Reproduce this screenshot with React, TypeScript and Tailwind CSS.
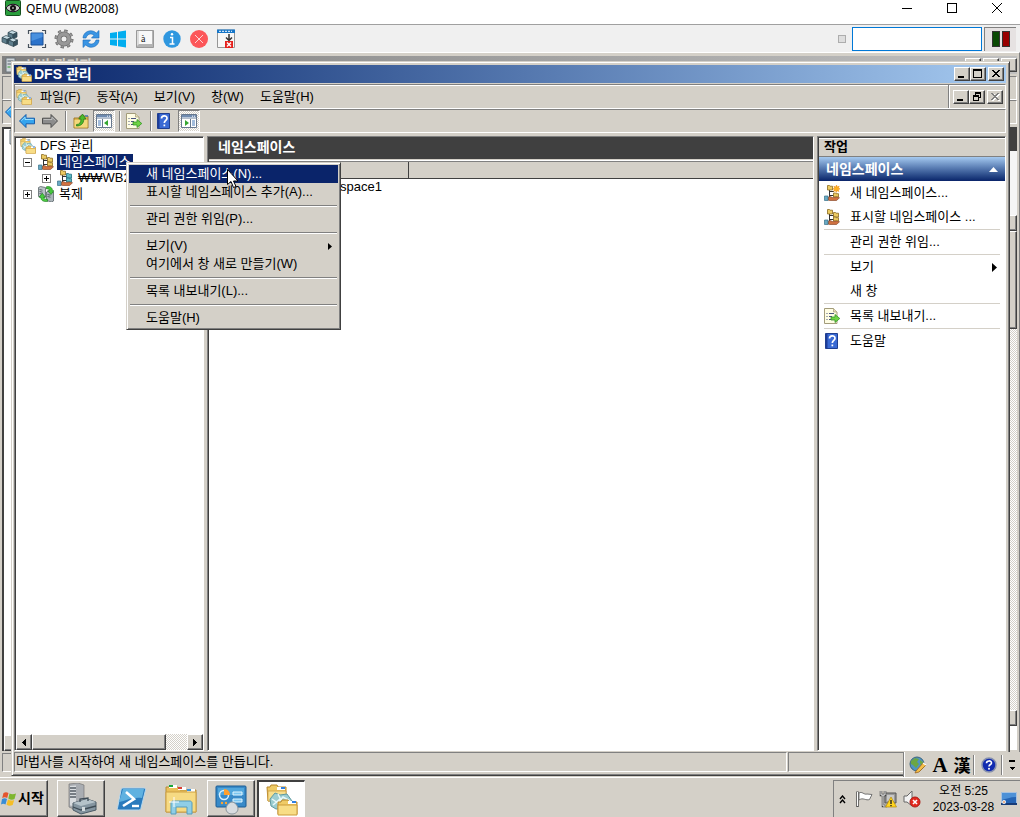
import React from "react";

const raised =
  "border border-t-white border-l-white border-r-[#404040] border-b-[#404040] bg-[#d4d0c8] shadow-[inset_-1px_-1px_0_#808080]";
const sunken = "border border-t-[#808080] border-l-[#808080] border-r-white border-b-white";
const pane = "border border-t-[#808080] border-l-[#808080] border-r-white border-b-white";
const checker =
  "bg-[repeating-conic-gradient(#ffffff_0_25%,#d4d0c8_0_50%)] bg-[length:2px_2px]";

type IconProps = { className?: string };

function Folders({ className = "size-4" }: IconProps) {
  return (
    <svg viewBox="0 0 32 32" className={className} aria-hidden="true">
      <path d="M1 3h3l1-2h6l1 2h8v14H2z" fill="#efcb66" stroke="#b8872b" />
      <path d="M11 3h8v3h-8z" fill="#fff" />
      <path d="M15 3h4v2h-4z" fill="#2f7fe0" />
      <path d="M2 7h18v10H2z" fill="#f8df8d" stroke="#cfa145" strokeWidth=".8" />
      <path d="m4 15 5-6 5 2 7-1 5 7-4 7-12 1-5-3z" fill="#9ccdd0" stroke="#5e9ba2" />
      <path d="m6 15 6 4 5-6 7 4M7 21l7-6 8 7M12 10l3 6" fill="none" stroke="#e8f8f8" strokeWidth="1.500" />
      <path d="M12 18h3l1-2h6l1 2h8v12H12z" fill="#efcb66" stroke="#b8872b" />
      <path d="M22 17h8v3h-8z" fill="#fff" />
      <path d="M26 17h4v2h-4z" fill="#2f7fe0" />
      <path d="M12 21h19v10H12z" fill="#f8dd86" stroke="#cb9b3b" />
    </svg>
  );
}

function Namespace({ className = "size-4", star = false, teal = false }: IconProps & { star?: boolean; teal?: boolean }) {
  const c = teal ? "#5cbcc4" : "#eccb62";
  const s = teal ? "#236f80" : "#8c6a1e";
  return (
    <svg viewBox="0 0 16 16" className={className} aria-hidden="true">
      <path d="M5.500 4v8M5.500 6.500H10M5.500 10.500H10" stroke="#333" strokeWidth="1" fill="none" />
      <path d="M3.500.5h2l.5.700h2.500V5h-5z" fill="#eccb62" stroke="#8c6a1e" strokeWidth=".8" />
      {!star && <path d="M9.500 3.500h2l.5.700h2.500V8h-5z" fill={c} stroke={s} strokeWidth=".8" />}
      <path d="M9.500 8h2l.5.700h2.500V12h-5z" fill={c} stroke={s} strokeWidth=".8" />
      <path d="M4 12.500 6 11.500l2.500 1 4-.5 3 .8-3 2.700H5.500L4 15z" fill="#cf7140" stroke="#7f3c1c" strokeWidth=".6" />
      <path d="M.5 11h3.500v4.500H.5z" fill="#69a9c4" stroke="#38718a" strokeWidth=".7" />
      {star && (
        <path
          d="m12.500 0 .8 2 1.900-.9-.8 1.900 1.600.9-1.800.7.700 1.900-1.900-.8-.8 1.800-.7-1.900-1.900.8.800-1.800L9 3.900l1.500-.9-.7-1.800 1.900.8z"
          fill="#ffb020"
          stroke="#e8870c"
          strokeWidth=".5"
        />
      )}
    </svg>
  );
}

function Replication({ className = "size-4" }: IconProps) {
  return (
    <svg viewBox="0 0 16 16" className={className} aria-hidden="true">
      <path d="m.5 1.500 2-1 5 1V11l-2 1-5-1.500z" fill="#b9c2c6" stroke="#5a646a" strokeWidth=".8" />
      <path d="m1.500 3.500 3 .7M1.500 5.500l3 .7M1.500 7.500l3 .7" stroke="#3f4a52" strokeWidth=".8" />
      <path d="m8.500 6 2-1 5 1v9l-2 1-5-1.500z" fill="#aab4b9" stroke="#5a646a" strokeWidth=".8" />
      <path d="m9.500 8.500 3 .7m-3 1.300 3 .7" stroke="#3f4a52" strokeWidth=".8" />
      <path d="M8.500.7c3.500-.7 6 1 6 4H16L13 8.500 9.700 4.700h1.800C11.300 3.200 10.300 2.700 8.500 3z" fill="#45c53c" stroke="#15761a" strokeWidth=".6" />
      <path d="M9.500 15.500c-4 .5-6.700-1-6.700-4.300H1L4.300 7.300l3.200 3.900H5.700c.1 1.700 1.500 2.300 3.800 2z" fill="#4bcb40" stroke="#15761a" strokeWidth=".6" />
    </svg>
  );
}

function Arrow({ className = "size-4", gray = false }: IconProps & { gray?: boolean }) {
  return (
    <svg viewBox="0 0 16 16" className={className} aria-hidden="true">
      <path
        d={gray ? "M15.500 8 9 1.500v3.700H.5v5.600H9v3.700z" : "M.5 8 7 1.500v3.700h8.500v5.600H7v3.700z"}
        fill={gray ? "#8c8c8c" : "#35a4ee"}
        stroke={gray ? "#4e4e4e" : "#165fae"}
        strokeWidth="1"
      />
      <path d={gray ? "M1.500 6.500H10V4.200l3.500 3.500" : "M2.500 7.700 6 4.200v2.300h8.500"} fill="none" stroke={gray ? "#bdbdbd" : "#98e0ff"} strokeWidth="1" />
    </svg>
  );
}

function UpFolder() {
  return (
    <svg viewBox="0 0 16 16" className="size-4" aria-hidden="true">
      <path d="M1 5h5l1-2h8v12H1z" fill="#dfb850" stroke="#9c7524" strokeWidth=".9" />
      <path d="M1.500 7h13v7.500h-13z" fill="#f3d87c" />
      <path d="M3.500 11.500c3 0 4.500-2 4.500-5.500H5.800L9.500 1 13 6h-2.200c0 4.500-2.800 7-7.300 7z" fill="#4dbb2c" stroke="#1d7314" strokeWidth=".7" />
      <path d="M12 3h3" stroke="#2f78d6" strokeWidth="1.200" />
    </svg>
  );
}

function PanelIcon({ right = false }: { right?: boolean }) {
  return (
    <svg viewBox="0 0 16 16" className="size-4" aria-hidden="true">
      <path d="M.5 1.500h15v13H.5z" fill="#fff" stroke="#66778d" />
      <path d="M1 2h14v2.500H1z" fill="#6f8bb0" />
      <path d="M11 3.200h3" stroke="#fff" strokeDasharray="1 1" />
      <path d="M1 5.500h14" stroke="#b3bdca" />
      {right ? (
        <>
          <path d="M9.500 6v8" stroke="#66778d" />
          <path d="M11 8H14M11 10H14M11 12H14" stroke="#477bb9" />
          <path d="m4 7 4 3-4 3z" fill="#35a62f" />
        </>
      ) : (
        <>
          <path d="M6.500 6v8" stroke="#66778d" />
          <path d="M2 8h3M2 10h3M2 12h3" stroke="#477bb9" />
          <path d="m12 7-4 3 4 3z" fill="#35a62f" />
        </>
      )}
    </svg>
  );
}

function ExportIcon() {
  return (
    <svg viewBox="0 0 16 16" className="size-4" aria-hidden="true">
      <path d="M.5.5h9L13 4v11.500H.5z" fill="#fffde4" stroke="#a39c7a" />
      <path d="M9.500.5V4H13" fill="#e3dcb5" stroke="#a39c7a" strokeWidth=".7" />
      <path d="M2.500 5.500h1M2.500 8.500h1M2.500 11.500h1M5 5.500h5M5 8.500h3M5 11.500h3" stroke="#4a5580" />
      <path d="M7 9h4V6.500L15.800 10.500 11 14.500V12H7z" fill="#6fd345" stroke="#329426" strokeWidth=".8" />
    </svg>
  );
}

function HelpBook() {
  return (
    <svg viewBox="0 0 16 16" className="size-4" aria-hidden="true">
      <path d="M1.500.5h12v15h-12z" fill="#3a6ad4" stroke="#203f91" />
      <path d="M2 1h1.500v14H2z" fill="#1d3c98" />
      <path d="M5.500 5.500c0-3.500 5.500-3.500 5.500-.3C11 7.400 8.400 7.300 8.300 10" fill="none" stroke="#fff" strokeWidth="1.700" />
      <path d="M7.500 11.500h1.700v1.800H7.500z" fill="#fff" />
    </svg>
  );
}

function QemuToolIcon({ kind }: { kind: string }) {
  return (
    <svg viewBox="0 0 20 20" className="size-5" aria-hidden="true">
      {kind === "cubes" && (
        <g stroke="#2f4650" strokeWidth=".7">
          {[[8, 1.500], [2, 6.500], [8.500, 9]].map(([x, y]) => (
            <g key={x} transform={`translate(${x} ${y})`}>
              <path d="m0 2 4-2 5 2-4 2z" fill="#c5dbe3" />
              <path d="M0 2v4.500l5 2V4z" fill="#5e7e8c" />
              <path d="m5 4 4-2v4.500l-4 2z" fill="#36515e" />
            </g>
          ))}
        </g>
      )}
      {kind === "full" && (
        <>
          <path d="M4 4h12v12H4z" fill="#2c73cb" stroke="#195097" />
          <path d="M4.500 12V4.500h11V8z" fill="#4a91df" />
          <path d="M1.500 5V1.500H5M15 1.500h3.500V5M18.500 15v3.500H15M5 18.500H1.500V15" fill="none" stroke="#47515c" strokeWidth="1.200" />
        </>
      )}
      {kind === "gear" && (
        <>
          <circle cx="10" cy="10" r="8" fill="none" stroke="#646464" strokeWidth="3" strokeDasharray="3.200 3.083" />
          <circle cx="10" cy="10" r="5" fill="none" stroke="#6d6d6d" strokeWidth="5" />
          <circle cx="10" cy="10" r="5" fill="none" stroke="#999" strokeWidth="3.500" />
          <circle cx="10" cy="10" r="8" fill="none" stroke="#999" strokeWidth="1.800" strokeDasharray="2.200 4.083" strokeDashoffset="-.5" />
        </>
      )}
      {kind === "refresh" && (
        <g fill="#3a95e4" stroke="#1b6ab7" strokeWidth=".6">
          <path d="M2 9C2 3 10-1 15.300 4L18 1.500V9h-7.500L13 6.300C9.500 3.500 6 5.500 5 9z" />
          <path d="M18 11c0 6-8 10-13.300 5L2 18.500V11h7.500L7 13.700c3.500 2.800 7 .8 8-2.700z" />
        </g>
      )}
      {kind === "windows" && <path d="m2 4 7-1v6.500H2zm8-1.200L18 1.500v8h-8zM2 10.500h7V17l-7-1zm8 0h8v8l-8-1.300z" fill="#00adef" />}
      {kind === "key" && (
        <>
          <path d="M1.500 1.500h17v17h-17z" fill="#b3b3b3" stroke="#999" />
          <path d="M2 2h15v13H4z" fill="#f8f8f8" />
          <path d="M2 2v15l2-2V2z" fill="#ddd" />
          <text x="6" y="13" fontSize="10" fontFamily="Liberation Serif, serif" fill="#222">à</text>
        </>
      )}
      {kind === "info" && (
        <>
          <circle cx="10" cy="10" r="8.700" fill="#2f97df" />
          <path d="M8 8.500h2.500V15M7.500 15h5" fill="none" stroke="#fff" strokeWidth="1.500" />
          <circle cx="10" cy="5.300" r="1.200" fill="#fff" />
        </>
      )}
      {kind === "close" && (
        <>
          <circle cx="10" cy="10" r="9" fill="#fc5659" />
          <path d="m6 6 8 8m0-8-8 8" stroke="#ffd3d3" />
        </>
      )}
      {kind === "detach" && (
        <>
          <path d="M1.500 1h17v17.500h-17z" fill="#f7f7f7" stroke="#969696" />
          <path d="M1 .5h18V4H1z" fill="#1676c8" />
          <path d="M3 2.300h13" stroke="#fff" strokeDasharray="2 1" />
          <path d="M13 5v6m-3-2.500 3 3 3-3" fill="none" stroke="#333" strokeWidth="1.500" />
          <path d="M9 12h8v7H9z" fill="#e5211d" />
          <path d="m11 13.500 4 4m0-4-4 4" stroke="#fff" strokeWidth="1.400" />
        </>
      )}
    </svg>
  );
}

function WinGlyph({ kind, dim = false }: { kind: string; dim?: boolean }) {
  const s = dim ? "#808080" : "#000";
  return (
    <svg viewBox="0 0 12 10" className="h-[10px] w-3" shapeRendering="crispEdges" aria-hidden="true">
      {kind === "min" && <path d="M2 7h6v2H2z" fill={s} />}
      {kind === "max" && <path d="M1 0h9v9H1zM2 2v6h7V2z" fillRule="evenodd" fill={s} />}
      {kind === "restore" && <path d="M4 0h6v6H8v3H2V3h2zM5 2v1h3v2h1V2zM3 5v3h4V5z" fillRule="evenodd" fill={s} />}
      {kind === "close" && (
        <>
          {dim && <path d="M3 2h2l2 2 2-2h2L8 5l3 4H9L7 6 5 9H3l3-4z" fill="#fff" />}
          <path d="M2 1h2v1h1v1h2V2h1V1h2v1H9v1H8v1H7v1h1v1h1v1h1v1H8V7H7V6H5v1H4v1H2V7h1V6h1V5h1V4H4V3H3V2H2z" fill={s} />
        </>
      )}
    </svg>
  );
}

function WindowButton({ kind, label, dim = false }: { kind: string; label: string; dim?: boolean }) {
  return (
    <button aria-label={label} disabled={dim} className={`${raised} flex h-[14px] w-4 items-center justify-center overflow-hidden`}>
      <WinGlyph kind={kind} dim={dim} />
    </button>
  );
}

function Divider() {
  return <div className="h-5 w-[2px] border-l border-r border-l-[#808080] border-r-white" />;
}

function ServerGlyph({ className = "size-4" }: IconProps) {
  return (
    <svg viewBox="0 0 16 16" className={className} aria-hidden="true">
      <path d="M2 1h9v14H2z" fill="#cfd5da" stroke="#6b747b" />
      <path d="M3.500 4h6M3.500 7h6" stroke="#56606a" />
      <path d="M3.500 10h3" stroke="#33a02c" />
    </svg>
  );
}

function BackWindow() {
  return (
    <section aria-label="서버 관리자" className="absolute inset-0 flex flex-col border-t border-r border-t-white border-r-[#808080] bg-[#d4d0c8] px-[2px] pt-[3px]">
      <div className="flex h-[18px] shrink-0 items-center bg-linear-to-r from-[#808080] to-[#c0c0c0] pl-[2px] text-[14px] leading-[18px] font-bold text-[#d4d0c8]">
        <ServerGlyph />
        <span className="flex-1 pl-1">서버 관리자</span>
        <span className="flex gap-[2px]">
          <span className={`${raised} h-[14px] w-4`} />
          <span className={`${raised} h-[14px] w-4`} />
          <span className={`${raised} h-[14px] w-4`} />
        </span>
      </div>
      <div className={`${sunken} mt-[2px] h-6 shrink-0`} />
      <div className={`${sunken} flex h-6 shrink-0 items-center`}>
        <Arrow className="ml-[2px] size-4" />
      </div>
      <div className="mt-[3px] flex min-h-0 flex-1">
        <div className="flex w-[120px] flex-col border-t-2 border-l-2 border-[#404040] bg-white">
          <ServerGlyph className="ml-1 size-4" />
          <div className="flex-1" />
          <div className={`${raised} h-4 w-4`} />
        </div>
        <div className="flex flex-1 flex-col border-b border-[#d4d0c8] bg-white">
          <div className="h-6 bg-[#404040]" />
          <div className="flex flex-1 justify-end">
            <div className={`flex w-4 flex-col ${checker}`}>
              <div className="h-16 bg-[#f5f5f5]" />
              <div className={`${raised} h-4`} />
              <div className={`${raised} h-[98px]`} />
              <div className="flex-1" />
              <div className={`${raised} h-4`} />
              <div className="h-6 bg-white" />
            </div>
          </div>
        </div>
      </div>
      <div className={`${sunken} mt-[2px] mb-[5px] h-[19px] shrink-0`} />
    </section>
  );
}

function Expander({ open = false }: { open?: boolean }) {
  return (
    <button aria-label={open ? "축소" : "확장"} className="mr-[6px] size-[9px] shrink-0">
      <svg viewBox="0 0 9 9" className="size-[9px]" shapeRendering="crispEdges" aria-hidden="true">
        <path d="M0 0h9v9H0z" fill="#808080" />
        <path d="M1 1h7v7H1z" fill="#fff" />
        <path d={open ? "M2 4h5v1H2z" : "M2 4h2V2h1v2h2v1H5v2H4V5H2z"} fill="#000" />
      </svg>
    </button>
  );
}

function ScrollArrow({ left = false }: { left?: boolean }) {
  return (
    <button aria-label={left ? "왼쪽으로" : "오른쪽으로"} className={`${raised} flex size-4 items-center justify-center`}>
      <svg viewBox="0 0 4 7" className="h-[7px] w-1" shapeRendering="crispEdges" aria-hidden="true">
        <path d={left ? "M4 0v7L0 3.500z" : "M0 0v7l4-3.500z"} />
      </svg>
    </button>
  );
}

function Tree() {
  return (
    <div className={`${pane} flex w-[190px] shrink-0 flex-col`}>
      <div className="flex min-h-0 flex-1 flex-col overflow-hidden border-t border-l border-[#404040] bg-white">
        <ul className="flex-1 overflow-hidden leading-4 whitespace-nowrap">
          <li className="flex h-4 items-center gap-1 pl-1">
            <Folders />
            <span>DFS 관리</span>
          </li>
          <li className="flex h-4 items-center pl-[7px]">
            <Expander open />
            <Namespace />
            <span className="ml-[3px] bg-[#0a246a] px-[2px] text-white">네임스페이스</span>
          </li>
          <li className="flex h-4 items-center pl-[26px]">
            <Expander />
            <Namespace teal />
            <span className="ml-[5px]">₩₩WB20</span>
          </li>
          <li className="flex h-4 items-center pl-[7px]">
            <Expander />
            <Replication />
            <span className="ml-[5px]">복제</span>
          </li>
        </ul>
        <div className={`flex h-4 shrink-0 ${checker}`}>
          <ScrollArrow left />
          <div className={`${raised} w-[134px]`} />
          <div className="flex-1" />
          <ScrollArrow />
        </div>
      </div>
    </div>
  );
}

function Center() {
  return (
    <div className={`${pane} flex min-w-0 flex-1 flex-col`}>
      <div className="flex min-h-0 flex-1 flex-col border-l border-t border-[#404040] bg-white">
        <h2 className="h-[21px] shrink-0 bg-[#404040] pl-[9px] text-[14px] leading-[19px] font-bold text-white">네임스페이스</h2>
        <div className="h-[3px] shrink-0 border-t border-b border-t-[#d4d0c8] border-b-[#808080]" />
        <table className="w-full table-fixed border-collapse">
          <thead>
            <tr className="h-4 bg-[#d4d0c8]">
              <th aria-label="네임스페이스" className="w-[199px] border-r border-b border-[#404040] p-0" />
              <th aria-label="종류" className="border-b border-l border-b-[#404040] border-l-white p-0" />
            </tr>
          </thead>
          <tbody>
            <tr>
              <td className="h-4 p-0 pl-[131px] leading-4">space1</td>
              <td />
            </tr>
          </tbody>
        </table>
      </div>
    </div>
  );
}

function Action({ icon, label, arrow = false }: { icon?: React.ReactNode; label: string; arrow?: boolean }) {
  return (
    <button className="flex h-6 w-full items-center text-left whitespace-nowrap">
      <span className="mr-[10px] w-4 shrink-0">{icon}</span>
      <span className="flex-1">{label}</span>
      {arrow && (
        <svg viewBox="0 0 5 9" className="mr-[3px] h-[9px] w-[5px]" aria-hidden="true">
          <path d="M0 0v9l5-4.500z" />
        </svg>
      )}
    </button>
  );
}

const ActionLine = () => <div className="h-px bg-[#d4d0c8]" />;

function Actions() {
  return (
    <aside className={`${pane} flex w-[189px] shrink-0 flex-col`}>
      <div className="flex flex-1 flex-col border-t border-l border-[#404040] bg-white">
        <h2 className="h-[18px] border-t border-white bg-[#d4d0c8] pl-[5px] text-[13px] leading-4 font-bold">작업</h2>
        <div className="flex h-[25px] items-center border-t border-[#808080] bg-linear-to-b from-[#a6caf0] to-[#0a246a] px-[7px] text-white">
          <h3 className="flex-1 text-[14px] font-bold">네임스페이스</h3>
          <svg viewBox="0 0 9 5" className="h-[5px] w-[9px]" aria-hidden="true">
            <path d="M0 5h9L4.500 0z" fill="#fff" />
          </svg>
        </div>
        <div className="px-[5px]">
          <Action icon={<Namespace star />} label="새 네임스페이스..." />
          <Action icon={<Namespace />} label="표시할 네임스페이스 ..." />
          <ActionLine />
          <Action label="관리 권한 위임..." />
          <ActionLine />
          <Action label="보기" arrow />
          <Action label="새 창" />
          <ActionLine />
          <Action icon={<ExportIcon />} label="목록 내보내기..." />
          <ActionLine />
          <Action icon={<HelpBook />} label="도움말" />
        </div>
      </div>
    </aside>
  );
}

function DfsWindow() {
  return (
    <section
      aria-label="DFS 관리"
      className="absolute top-[9px] right-[10px] bottom-[1px] left-[11px] flex flex-col border border-t-[#d4d0c8] border-r-[#404040] border-b-[#404040] border-l-[#d4d0c8] bg-[#d4d0c8] pt-[3px] pr-[3px] pl-[2px] shadow-[inset_1px_1px_0_#fff,inset_-1px_-1px_0_#808080]"
    >
      <header className="flex h-[18px] shrink-0 items-center bg-linear-to-r from-[#0a246a] to-[#a6caf0] pr-[2px] pl-[2px]">
        <Folders />
        <h1 className="flex-1 pl-[2px] text-[14px] leading-[18px] font-bold text-white">DFS 관리</h1>
        <WindowButton kind="min" label="최소화" />
        <WindowButton kind="max" label="최대화" />
        <span className="w-[2px]" />
        <WindowButton kind="close" label="닫기" />
      </header>
      <nav className={`${sunken} mt-px flex h-[25px] shrink-0 items-center pl-px shadow-[inset_0_1px_0_#fff]`}>
        <Folders />
        {["파일(F)", "동작(A)", "보기(V)", "창(W)", "도움말(H)"].map((m) => (
          <button key={m} className="px-2 leading-5">
            {m}
          </button>
        ))}
        <span className="flex-1" />
        <span className="flex h-full items-center border-l border-white pr-[2px] pl-[3px] shadow-[-1px_0_0_#808080]">
          <WindowButton kind="min" label="창 최소화" />
          <WindowButton kind="restore" label="창 복원" />
          <span className="w-[2px]" />
          <WindowButton kind="close" label="창 닫기" dim />
        </span>
      </nav>
      <div className={`${sunken} flex h-6 shrink-0 items-center pl-1`}>
        <button aria-label="뒤로" className="mr-[7px]"><Arrow /></button>
        <button aria-label="앞으로" className="mr-[7px]"><Arrow gray /></button>
        <Divider />
        <button aria-label="위로" className="mr-1 ml-[6px]"><UpFolder /></button>
        <button aria-label="콘솔 트리" className={`${sunken} ${checker} mr-[4px] flex h-[22px] w-[22px] items-center justify-center`}><PanelIcon /></button>
        <Divider />
        <button aria-label="목록 내보내기" className="mr-2 ml-[5px]"><ExportIcon /></button>
        <Divider />
        <button aria-label="도움말" className="mr-[6px] ml-1"><HelpBook /></button>
        <button aria-label="작업 창" className={`${sunken} ${checker} flex h-[22px] w-[22px] items-center justify-center`}><PanelIcon right /></button>
      </div>
      <main className="mt-[3px] flex min-h-0 flex-1 gap-[3px]">
        <Tree />
        <Center />
        <Actions />
      </main>
      <footer className="mt-px mb-[3px] flex h-5 shrink-0 gap-px leading-[18px]">
        <p className={`${sunken} flex-1 pl-px`}>마법사를 시작하여 새 네임스페이스를 만듭니다.</p>
        <span className={`${sunken} w-[116px]`} />
        <span className="w-[101px]" />
      </footer>
    </section>
  );
}

function MenuItem({ children, active = false, arrow = false }: { children: React.ReactNode; active?: boolean; arrow?: boolean }) {
  return (
    <button role="menuitem" className={`flex h-[18px] w-full items-center pr-[6px] pl-[17px] text-left ${active ? "bg-[#0a246a] text-white" : ""}`}>
      <span className="flex-1">{children}</span>
      {arrow && (
        <svg viewBox="0 0 4 7" className="h-[7px] w-1" aria-hidden="true">
          <path d="M0 0v7l4-3.500z" />
        </svg>
      )}
    </button>
  );
}

const MenuLine = () => (
  <div className="flex h-[9px] flex-col justify-center px-px">
    <div className="h-[2px] border-t border-b border-t-[#808080] border-b-white" />
  </div>
);

function ContextMenu() {
  return (
    <div role="menu" className="absolute top-[162px] left-[126px] w-[215px] border border-t-[#d4d0c8] border-r-[#404040] border-b-[#404040] border-l-[#d4d0c8] bg-[#d4d0c8] p-[2px] whitespace-nowrap shadow-[inset_1px_1px_0_#fff,inset_-1px_-1px_0_#808080]">
      <MenuItem active>새 네임스페이스(N)...</MenuItem>
      <MenuItem>표시할 네임스페이스 추가(A)...</MenuItem>
      <MenuLine />
      <MenuItem>관리 권한 위임(P)...</MenuItem>
      <MenuLine />
      <MenuItem arrow>보기(V)</MenuItem>
      <MenuItem>여기에서 창 새로 만들기(W)</MenuItem>
      <MenuLine />
      <MenuItem>목록 내보내기(L)...</MenuItem>
      <MenuLine />
      <MenuItem>도움말(H)</MenuItem>
    </div>
  );
}

function LanguageBar() {
  return (
    <div className="absolute right-0 bottom-0 flex h-[25px] w-[116px] items-center border-l border-white bg-[#d4d0c8] pl-1 text-black shadow-[-1px_0_0_#808080]">
      <button aria-label="입력기" className="mr-[5px]">
        <svg viewBox="0 0 18 18" className="size-[18px]" aria-hidden="true">
          <circle cx="8" cy="8" r="7" fill="#4f93c4" stroke="#3b647c" />
          <path d="m2 5 4-3 4 1-2 3 2 2-3 4-3-3-2-1zM11 4l3 2v4l-3-2z" fill="#6ba645" />
          <path d="m7 15 7-8 3 2-7 7-4 1z" fill="#f5bf48" stroke="#9a6422" strokeWidth=".8" />
          <path d="m14 7 3 2" stroke="#fff" strokeWidth="1.500" />
        </svg>
      </button>
      <button aria-label="영문" className="w-4 text-center font-['Liberation_Serif',serif] text-[21px] leading-5 font-bold">A</button>
      <button aria-label="한자" className="ml-[5px] w-[18px] font-['Noto_Sans_CJK_KR',sans-serif] text-[17px] leading-5 font-bold">漢</button>
      <span className="ml-[2px]"><Divider /></span>
      <button aria-label="도움말" className="mr-[4px] ml-[6px]">
        <svg viewBox="0 0 16 16" className="size-4" aria-hidden="true">
          <circle cx="8" cy="8" r="7" fill="#112bb0" stroke="#8791ae" strokeWidth="1.500" />
          <path d="M5.500 6.200c0-3 5-3 5-.2C10.500 7.600 8 7.500 8 9.500" fill="none" stroke="#fff" strokeWidth="1.600" />
          <circle cx="8" cy="11.800" r="1" fill="#fff" />
        </svg>
      </button>
      <Divider />
      <svg viewBox="0 0 6 12" className="ml-[6px] h-3 w-[6px]" shapeRendering="crispEdges" aria-hidden="true">
        <path d="M0 1h6v2H0zM0 8h6l-3 3z" />
      </svg>
    </div>
  );
}

function TaskIcon({ kind }: { kind: string }) {
  return (
    <svg viewBox="0 0 32 32" className="size-8" aria-hidden="true">
      {kind === "server" && (
        <>
          <path d="m4 1 9-1 6 2v22l-8 3-7-3z" fill="#a9adb2" stroke="#777" strokeWidth=".7" />
          <path d="m5 3 6-.5v21l-6-1z" fill="#d9dde0" />
          <path d="M5 5h6M5 8h6M5 11h6M5 14h6" stroke="#555d66" strokeWidth="1.500" />
          <path d="m8 20 14-4 9 3v8l-15 4-8-4z" fill="#8495a0" stroke="#4a5a65" />
          <path d="m8 20 8 3 15-4-9-3z" fill="#b5c3ca" />
          <path d="M15 19v-3l8-1v3M8 24l8 3 15-4" fill="none" stroke="#3e4c56" strokeWidth="1.300" />
          <path d="M17 24h3v4h-3z" fill="#d2dadd" />
        </>
      )}
      {kind === "powershell" && (
        <>
          <path d="M8 5h21c1 0 2 1 1.500 2L26 25c0 1-1 2-2.500 2H4c-1.500 0-2-1-1.500-2L6 7c.3-1 1-2 2-2z" fill="#2a7bbd" stroke="#b7d9ef" />
          <path d="M8 6h21l-2 9C16 14 11 18 4 19z" fill="#5fb1e0" />
          <path d="m11 9 8 7-11 7" fill="none" stroke="#fff" strokeWidth="2.600" />
          <path d="M17 23h7" stroke="#fff" strokeWidth="2.400" />
        </>
      )}
      {kind === "explorer" && (
        <>
          <path d="M1 4h12l2 3h16v22H1z" fill="#eac05a" stroke="#b68d39" />
          <path d="M4 2h8v3H4zM13 4h8v3h-8zM22 6h8v3h-8z" fill="#fff" />
          <path d="M4 2h4v2H4z" fill="#18a83b" />
          <path d="M13 4h4v2h-4z" fill="#db4136" />
          <path d="M22 6h4v2h-4z" fill="#3b95dd" />
          <path d="M1 9h30v20H1z" fill="#f6da83" stroke="#cda045" />
          <path d="M6 31V20c0-1 1-2 2-2h17c1 0 2 1 2 2v11h-5v-7H11v7z" fill="#8fcee6" stroke="#559cbd" />
          <path d="M9 14v10M4 19h10" stroke="#fff" />
        </>
      )}
      {kind === "control" && (
        <>
          <path d="M2 3h28q1 0 1 1v19q0 1-1 1H2q-1 0-1-1V4q0-1 1-1z" fill="#388ac8" stroke="#1b5c94" />
          <path d="M3 5h26v7H3z" fill="#51a6dc" />
          <circle cx="9" cy="12" r="4.500" fill="none" stroke="#d6effd" strokeWidth="1.500" />
          <path d="M9 12V6c4 0 6 3 6 6z" fill="#ff9f2d" />
          <path d="M18 9h9v3h-9zM18 16h9v3h-9z" fill="#7cc6f0" stroke="#e0f6ff" />
          <circle cx="7" cy="20" r="1.200" fill="#ffa431" />
          <circle cx="11" cy="20" r="1.200" fill="#ffa431" />
          <path d="M11 26c0-3 3-7 6-7s6 4 6 7-3 5-6 5-6-2-6-5z" fill="#d8dcdf" stroke="#899399" />
        </>
      )}
    </svg>
  );
}

function Taskbar() {
  return (
    <footer className="flex h-10 shrink-0 items-stretch border-t border-white bg-[#d4d0c8] pt-[2px]">
      <button className={`${raised} mr-[9px] flex w-12 items-center gap-px border-l-0 pl-px text-[14px] font-bold`}>
        <svg viewBox="0 0 16 16" className="size-4" aria-hidden="true">
          <path d="M2.500 2c2-1 3-1 5 0L6.200 7C4.500 6 3.200 6 1.200 7z" fill="#e4542d" />
          <path d="M8.500 2.500c2 1 4 1 6.500 0L13.500 8c-2 1-4 1-6.200-.5z" fill="#7eb62e" />
          <path d="M1 8c2-1 3.300-1 5 0l-1.500 5.500c-1.500-1-3-1-4.500 0z" fill="#398dd5" />
          <path d="M7 8.500c2 1.200 4 1.200 6.200.4L11.700 14c-2.500 1-4 1-6.200-.2z" fill="#f5be26" />
        </svg>
        <span>시작</span>
      </button>
      <div className="flex gap-[2px]">
        <button aria-label="서버 관리자" className={`${raised} flex w-12 items-center justify-center`}><TaskIcon kind="server" /></button>
        <button aria-label="PowerShell" className="flex w-12 items-center justify-center"><TaskIcon kind="powershell" /></button>
        <button aria-label="탐색기" className="flex w-12 items-center justify-center"><TaskIcon kind="explorer" /></button>
        <button aria-label="제어판" className={`${raised} flex w-12 items-center justify-center`}><TaskIcon kind="control" /></button>
        <button aria-label="DFS 관리" className="flex w-12 items-center justify-center border-t-2 border-r border-l-2 border-t-[#404040] border-r-white border-l-[#404040] bg-white">
          <Folders className="size-8" />
        </button>
      </div>
      <div className="flex-1" />
      <div className="flex w-[187px] items-center border-t border-l border-[#808080]">
        <button aria-label="숨겨진 아이콘 표시" className="mr-[9px] ml-[5px]">
          <svg viewBox="0 0 7 9" className="h-[9px] w-[7px]" aria-hidden="true">
            <path d="m1 4 2.500-3L6 4M1 8l2.500-3L6 8" fill="none" stroke="#000" strokeWidth="1.400" />
          </svg>
        </button>
        <svg viewBox="0 0 18 18" className="size-[18px]" aria-hidden="true">
          <path d="M2.500 1.500V17" stroke="#555" strokeWidth="2.600" />
          <path d="M2.500 2v14" stroke="#fff" />
          <path d="M4 3c3-2 5 2 8 1l5 .5-2.500 5C11 11 8 7 4 10z" fill="#fff" stroke="#666" strokeWidth=".9" />
        </svg>
        <svg viewBox="0 0 18 18" className="ml-[6px] size-[18px]" aria-hidden="true">
          <path d="M6 3h11v10H6z" fill="#9b9b9b" stroke="#555" />
          <path d="M8 5h7v6H8z" fill="#c7c7c7" />
          <path d="M2 1v4h4V1M4 5v11h4" fill="none" stroke="#444" strokeWidth="2.500" />
          <path d="M2 1v4h4V1M4 5v11h4" fill="none" stroke="#eee" />
          <path d="m12 7 5.500 10h-11z" fill="#ffd51f" stroke="#b58a07" strokeWidth=".7" />
          <path d="M12 10v4m0 1v1.300" stroke="#222" strokeWidth="1.400" />
        </svg>
        <svg viewBox="0 0 18 18" className="ml-[6px] size-[18px]" aria-hidden="true">
          <path d="M1 6h3l5-5v15l-5-4H1z" fill="#f3f3f3" stroke="#666" />
          <circle cx="12" cy="12" r="5" fill="#e3281e" stroke="#aa1e17" />
          <path d="m10 10 4 4m0-4-4 4" stroke="#fff" strokeWidth="1.600" />
        </svg>
        <time className="flex-1 pl-[5px] text-center text-[12px] leading-4">
          오전 5:25
          <br />
          2023-03-28
        </time>
        <button aria-label="바탕 화면 보기" className="mr-[3px]">
          <svg viewBox="0 0 16 14" className="h-[14px] w-4" aria-hidden="true">
            <path d="M.5.5h15V12H.5z" fill="#2564b4" stroke="#a8c2df" />
            <path d="M1 1h14v4C9 5 5 7 1 8z" fill="#4d91d7" />
            <path d="M0 11h16v2H0z" fill="#173c78" />
            <circle cx="3" cy="10" r="2" fill="#f1f5fa" />
            <path d="M2 10h2" stroke="#e67425" />
          </svg>
        </button>
      </div>
    </footer>
  );
}

function QemuHeader() {
  return (
    <>
      <header className="flex h-6 shrink-0 items-start bg-white font-['Noto_Sans','Noto_Sans_CJK_KR',sans-serif]">
        <svg viewBox="0 0 16 16" className="ml-[5px] size-4" aria-hidden="true">
          <rect x=".5" y=".5" width="15" height="15" rx="1" fill="#2a9e3d" stroke="#14501d" />
          <path d="M1 8c3-5 11-5 14 0-3 5-11 5-14 0z" fill="#c3cdc3" stroke="#202" />
          <circle cx="8" cy="8" r="3" fill="#111" />
          <circle cx="8" cy="8" r="1" fill="#aaa" />
        </svg>
        <span className="flex-1 pl-[5px] text-[12px] leading-[18px]">QEMU (WB2008)</span>
        <div className="flex gap-[35px] pt-[3px] pr-[18px]">
          <button aria-label="최소화">
            <svg viewBox="0 0 10 10" className="size-[10px]" shapeRendering="crispEdges"><path d="M0 5h10v1H0z" /></svg>
          </button>
          <button aria-label="최대화">
            <svg viewBox="0 0 10 10" className="size-[10px]" shapeRendering="crispEdges"><path d="M.5.5h9v9h-9z" fill="none" stroke="#000" /></svg>
          </button>
          <button aria-label="닫기">
            <svg viewBox="0 0 10 10" className="size-[10px]"><path d="m0 0 10 10m0-10L0 10" stroke="#000" /></svg>
          </button>
        </div>
      </header>
      <div className="flex h-7 shrink-0 items-center border-t border-[#a0a0a0] bg-[#f0f0f0]">
        <div className="flex flex-1 gap-[7px] pt-px">
          {["cubes", "full", "gear", "refresh", "windows", "key", "info", "close", "detach"].map((k) => (
            <button key={k} aria-label={k}>
              <QemuToolIcon kind={k} />
            </button>
          ))}
        </div>
        <span className="mr-[6px] size-2 border border-[#adadad] bg-[#dedede]" />
        <input aria-label="입력" className="h-6 w-[130px] border border-[#0078d7] bg-white outline-none" />
        <div className="mr-1 ml-[2px] flex h-6 w-8 items-center justify-center gap-[2px] border-t border-l border-[#808080] bg-[#e6e2e2]">
          <span className="h-4 w-2 border border-[#333] bg-[#0b4a05]" />
          <span className="h-4 w-2 border border-[#333] bg-[#980000]" />
        </div>
      </div>
    </>
  );
}

export default function App() {
  return (
    <div className="relative flex h-screen flex-col overflow-hidden bg-[#d4d0c8] font-['Liberation_Sans','Noto_Sans_CJK_KR',sans-serif] text-[13px] text-black">
      <QemuHeader />
      <div className="relative min-h-0 flex-1">
        <BackWindow />
        <DfsWindow />
        <LanguageBar />
      </div>
      <Taskbar />
      <ContextMenu />
      <svg viewBox="0 0 12 20" className="pointer-events-none absolute top-[169px] left-[227px] h-5 w-3" aria-hidden="true">
        <path d="M.5.500v15l3.500-3 2.500 6 2.500-1-2.500-5.500h4.500z" fill="#fff" stroke="#000" />
      </svg>
    </div>
  );
}
